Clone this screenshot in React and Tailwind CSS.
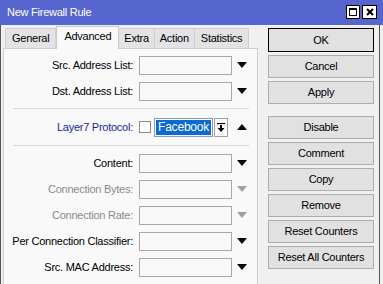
import React from 'react';

function DownArrow({ gray }) {
  return (
    <svg width="10" height="6" viewBox="0 0 10 6" className="shrink-0">
      <path d="M0 0 H10 L5 6 Z" fill={gray ? '#a0a0a0' : '#000'} />
    </svg>
  );
}

function UpArrow() {
  return (
    <svg width="10" height="6" viewBox="0 0 10 6" className="shrink-0">
      <path d="M0 6 H10 L5 0 Z" fill="#000" />
    </svg>
  );
}

function Row({ label, gray }) {
  return (
    <div className="h-[26px] flex items-center">
      <div className={`w-[130px] text-right pr-[1px] ${gray ? 'text-[#8a8a8a]' : 'text-black'}`}>{label}</div>
      <div className="ml-[5px] w-[93px] h-[19px] border border-[#a8a8a8] bg-[#f9f9f9]" />
      <div className="ml-[5px]">
        <DownArrow gray={gray} />
      </div>
    </div>
  );
}

const buttons = ['Disable', 'Comment', 'Copy', 'Remove', 'Reset Counters', 'Reset All Counters'];

export default function App() {
  return (
    <div className="w-[383px] h-[284px] overflow-hidden bg-[#f0f0f0] font-['Liberation_Sans',Arial,sans-serif] text-[11px] tracking-[-0.25px] text-black">
      <div className="h-[25px] bg-[#5765cf] flex items-center pl-[7px] pr-[6px] text-white">
        <span className="flex-1">New Firewall Rule</span>
        <div className="flex gap-[2px] mt-[-1px]">
          <div className="w-[14px] h-[14px] bg-white border border-black flex items-center justify-center">
            <div className="w-[8px] h-[8px] border border-black border-t-2" />
          </div>
          <div className="w-[15px] h-[14px] bg-white border border-black flex items-center justify-center">
            <svg width="8" height="8" viewBox="0 0 8 8">
              <path d="M1 1 L7 7 M7 1 L1 7" stroke="#000" strokeWidth="2" />
            </svg>
          </div>
        </div>
      </div>
      <div className="flex h-[259px] w-[380px] border-l border-r border-[#555]">
        <div className="w-[257px] pl-[2px] flex flex-col">
          <div className="h-[23px] flex items-end pl-[2px]">
            <div className="h-[20px] px-[6px] flex items-center bg-[#e3e3e3] border border-b-0 border-[#d0d0d0]">General</div>
            <div className="h-[23px] px-[7px] pb-[3px] flex items-center bg-[#f9f9f9] border border-b-0 border-[#c8c8c8] relative top-[1px]">Advanced</div>
            <div className="h-[20px] px-[5px] flex items-center bg-[#e3e3e3] border border-l-0 border-b-0 border-[#d0d0d0]">Extra</div>
            <div className="h-[20px] px-[5px] flex items-center bg-[#e3e3e3] border border-l-0 border-b-0 border-[#d0d0d0]">Action</div>
            <div className="h-[20px] px-[6px] flex items-center bg-[#e3e3e3] border border-l-0 border-b-0 border-[#d0d0d0]">Statistics</div>
          </div>
          <div className="flex-1 bg-[#f9f9f9] border border-b-0 border-[#cfcfcf] pt-[3px]">
            <Row label="Src. Address List:" />
            <Row label="Dst. Address List:" />
            <div className="mt-[4px] mb-[5px] ml-[9px] mr-[8px] border-t border-[#dadada]" />
            <div className="h-[26px] flex items-center">
              <div className="w-[130px] text-right pr-[1px] text-[#1c1ca8]">Layer7 Protocol:</div>
              <div className="ml-[5px] w-[12px] h-[12px] border border-[#8a8a8a] bg-white" />
              <div className="ml-[3px] w-[59px] h-[19px] border border-[#8a9ab8] bg-white p-[1px]">
                <div className="h-full bg-[#0a6ad6] text-white flex items-center pl-[2px] text-[12px] tracking-[-0.2px]">Facebook</div>
              </div>
              <div className="ml-[1px] w-[14px] h-[19px] border border-[#a0a0a0] bg-[#fbfbfb] flex items-center justify-center">
                <svg width="8" height="9" viewBox="0 0 8 9">
                  <path d="M0 0.5 H8" stroke="#000" strokeWidth="1.2" />
                  <path d="M3 2 H5 V5 H7.5 L4 9 L0.5 5 H3 Z" fill="#000" />
                </svg>
              </div>
              <div className="ml-[9px]">
                <UpArrow />
              </div>
            </div>
            <div className="mt-[5px] mb-[4px] ml-[9px] mr-[8px] border-t border-[#dadada]" />
            <Row label="Content:" />
            <Row label="Connection Bytes:" gray />
            <Row label="Connection Rate:" gray />
            <Row label="Per Connection Classifier:" />
            <Row label="Src. MAC Address:" />
          </div>
        </div>
        <div className="ml-[10px] pt-[3px] w-[106px] flex flex-col gap-[3px]">
          <button className="h-[24px] border border-black bg-[#e1e1e1] text-[11px] tracking-[-0.25px]">OK</button>
          <button className="h-[23px] border border-[#adadad] bg-[#e1e1e1] text-[11px] tracking-[-0.25px]">Cancel</button>
          <button className="h-[23px] border border-[#adadad] bg-[#e1e1e1] text-[11px] tracking-[-0.25px]">Apply</button>
          <div className="h-[6px]" />
          {buttons.map((b) => (
            <button key={b} className="h-[23px] border border-[#adadad] bg-[#e1e1e1] text-[11px] tracking-[-0.25px]">{b}</button>
          ))}
        </div>
      </div>
    </div>
  );
}
